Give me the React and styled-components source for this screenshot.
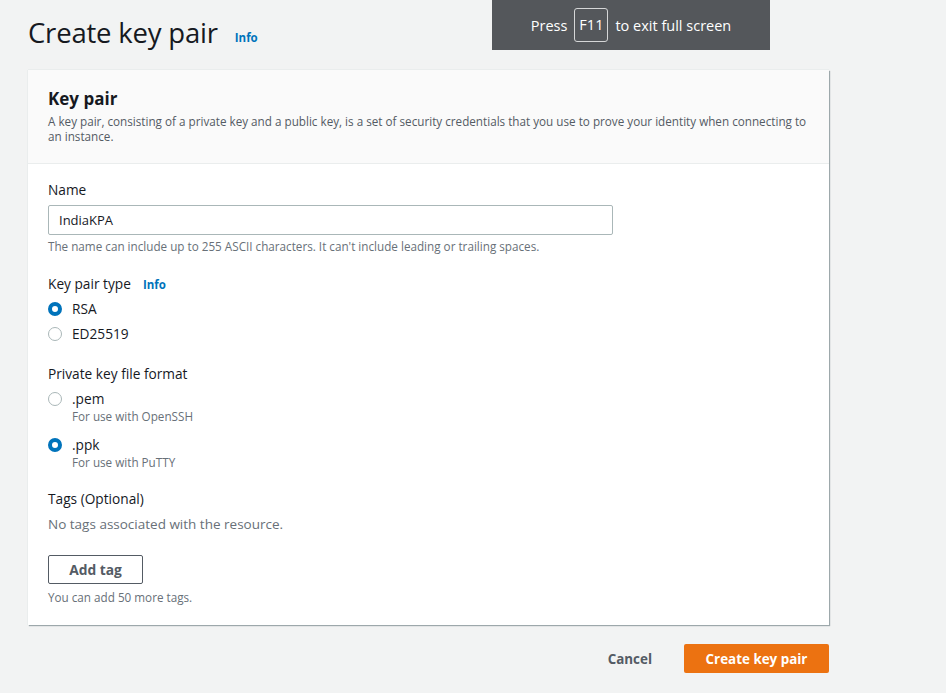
import React from 'react';
import styled, { createGlobalStyle } from 'styled-components';

const Global = createGlobalStyle`
  html, body {
    margin: 0;
    padding: 0;
    background: #f2f3f3;
    font-family: "Open Sans", "Noto Sans", Arial, sans-serif;
    color: #16191f;
  }
`;

const Page = styled.div`
  width: 946px;
  height: 693px;
  position: relative;
  overflow: hidden;
  padding: 0 0 0 28px;
  box-sizing: border-box;
`;

const TitleRow = styled.div`
  display: flex;
  align-items: baseline;
  gap: 17px;
  height: 70px;
  padding-top: 13px;
  box-sizing: border-box;
`;

const Title = styled.h1`
  margin: 0;
  font-size: 27.5px;
  font-weight: 400;
  line-height: 40px;
  letter-spacing: -0.2px;
`;

const InfoLink = styled.a`
  font-size: 11.5px;
  font-weight: 700;
  color: #0073bb;
  text-decoration: none;
  margin-left: ${(p) => p.$gap || 0}px;
  position: relative;
  top: ${(p) => p.$lift || 0}px;
`;

const FullscreenHint = styled.div`
  position: absolute;
  top: 0;
  left: 492px;
  width: 278px;
  height: 50px;
  background: #54575b;
  color: #fff;
  display: flex;
  align-items: center;
  justify-content: center;
  gap: 7px;
  font-size: 14.5px;
`;

const Kbd = styled.span`
  border: 1px solid #d5d6d7;
  border-radius: 3px;
  padding: 6px 4px;
  line-height: 20px;
`;

const Card = styled.section`
  width: 801px;
  background: #fff;
  box-shadow: 1px 1px 1px 0 rgba(0, 28, 36, 0.35), -1px 0 0 0 #eaeded, 0 -1px 0 0 #eaeded;
`;

const CardHeader = styled.header`
  background: #fafafa;
  border-bottom: 1px solid #eaeded;
  padding: 18px 20px 19px;
`;

const CardTitle = styled.h2`
  margin: 0 0 4px;
  font-size: 17px;
  font-weight: 700;
  line-height: 22px;
`;

const Description = styled.p`
  margin: 0;
  font-size: 11.7px;
  line-height: 15px;
  color: #545b64;
`;

const CardBody = styled.div`
  padding: 16px 20px 20px;
  display: flex;
  flex-direction: column;
`;

const Field = styled.div`
  display: flex;
  flex-direction: column;
  margin-bottom: ${(p) => p.$mb || 0}px;
`;

const Label = styled.div`
  font-size: 13.7px;
  line-height: 20px;
  color: #16191f;
  display: flex;
  align-items: baseline;
`;

const Input = styled.input`
  width: 565px;
  height: 30px;
  box-sizing: border-box;
  border: 1px solid #aab7b8;
  border-radius: 2px;
  padding: 0 10px;
  font-family: inherit;
  font-size: 13px;
  color: #16191f;
  margin-top: 5px;
  outline: none;
`;

const Hint = styled.div`
  font-size: 11.7px;
  line-height: 15px;
  color: #687078;
  margin-top: ${(p) => p.$mt || 0}px;
`;

const RadioRow = styled.label`
  display: flex;
  align-items: flex-start;
  gap: 10px;
  margin-top: ${(p) => p.$mt || 0}px;
`;

const RadioDot = styled.span`
  width: 14px;
  height: 14px;
  box-sizing: border-box;
  border-radius: 50%;
  margin-top: 3px;
  flex: none;
  border: ${(p) => (p.$checked ? '4px solid #0073bb' : '1px solid #aab7b8')};
  background: #fff;
`;

const RadioText = styled.div`
  display: flex;
  flex-direction: column;
  font-size: 13.7px;
  line-height: 20px;
`;

const SubText = styled.span`
  font-size: 11.7px;
  line-height: 14px;
  color: #687078;
`;

const Muted = styled.div`
  font-size: 13.5px;
  line-height: 20px;
  color: #687078;
  margin-top: 5px;
`;

const OutlineButton = styled.button`
  width: 95px;
  height: 29px;
  border: 1px solid #545b64;
  border-radius: 2px;
  background: #fff;
  color: #545b64;
  font-family: inherit;
  font-weight: 700;
  font-size: 13.8px;
  margin-top: 21px;
  padding: 0;
`;

const Footer = styled.div`
  width: 801px;
  display: flex;
  justify-content: flex-end;
  align-items: center;
  gap: 32px;
  margin-top: 19px;
`;

const TextButton = styled.button`
  border: none;
  background: none;
  font-family: inherit;
  font-weight: 700;
  font-size: 13.4px;
  color: #545b64;
  padding: 0;
`;

const PrimaryButton = styled.button`
  width: 145px;
  height: 29px;
  border: none;
  border-radius: 2px;
  background: #ec7211;
  color: #fff;
  font-family: inherit;
  font-weight: 700;
  font-size: 13.4px;
  padding: 0;
`;

const Radio = ({ checked, label, sub, mt }) => (
  <RadioRow $mt={mt}>
    <RadioDot $checked={checked} />
    <RadioText>
      {label}
      {sub && <SubText>{sub}</SubText>}
    </RadioText>
  </RadioRow>
);

export default function App() {
  return (
    <Page>
      <Global />
      <TitleRow>
        <Title>Create key pair</Title>
        <InfoLink href="#" $lift={-1}>Info</InfoLink>
      </TitleRow>

      <FullscreenHint>
        Press <Kbd>F11</Kbd> to exit full screen
      </FullscreenHint>

      <Card>
        <CardHeader>
          <CardTitle>Key pair</CardTitle>
          <Description>
            A key pair, consisting of a private key and a public key, is a set of security credentials that you use to
            prove your identity when connecting to an instance.
          </Description>
        </CardHeader>
        <CardBody>
          <Field $mb={20}>
            <Label>Name</Label>
            <Input defaultValue="IndiaKPA" />
            <Hint $mt={4}>The name can include up to 255 ASCII characters. It can't include leading or trailing spaces.</Hint>
          </Field>

          <Field $mb={20}>
            <Label>
              Key pair type <InfoLink href="#" $gap={12}>Info</InfoLink>
            </Label>
            <Radio checked label="RSA" mt={4} />
            <Radio label="ED25519" mt={5} />
          </Field>

          <Field $mb={20}>
            <Label>Private key file format</Label>
            <Radio label=".pem" sub="For use with OpenSSH" mt={5} />
            <Radio checked label=".ppk" sub="For use with PuTTY" mt={12} />
          </Field>

          <Field>
            <Label>Tags (Optional)</Label>
            <Muted>No tags associated with the resource.</Muted>
            <OutlineButton>Add tag</OutlineButton>
            <Hint $mt={6}>You can add 50 more tags.</Hint>
          </Field>
        </CardBody>
      </Card>

      <Footer>
        <TextButton>Cancel</TextButton>
        <PrimaryButton>Create key pair</PrimaryButton>
      </Footer>
    </Page>
  );
}
